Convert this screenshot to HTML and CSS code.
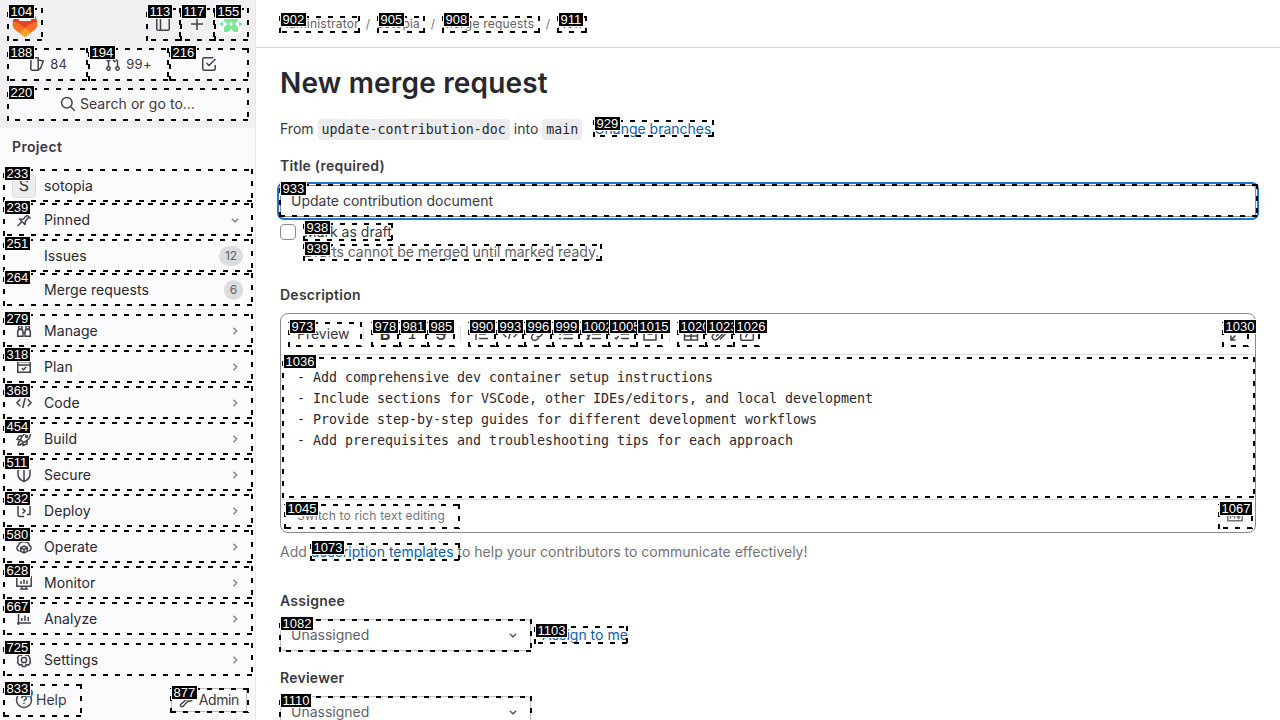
FILE: index.html
```html
<!DOCTYPE html>
<html lang="en">
<head>
<meta charset="utf-8">
<title>New merge request</title>
<link rel="stylesheet" href="styles.css">
</head>
<body>
<svg class="defs" width="0" height="0">
  <symbol id="chev-r" viewBox="0 0 16 16"><path d="M6.500 4.800 9.700 8l-3.200 3.200"/></symbol>
  <symbol id="chev-d" viewBox="0 0 16 16"><path d="M4.800 6.700 8 9.900l3.200-3.200"/></symbol>
  <symbol id="pin" viewBox="0 0 16 16"><path d="M1.500 14 5.500 10M3 6.500 9.500 13M4 7.500l3.500-.5L11 3M9 12.500l.5-3.500L13 5M9.500 1.500l5 5"/></symbol>
  <symbol id="users" viewBox="0 0 16 16"><path d="M1.700 13.200V9a2.500 2.500 0 0 1 5.300 0v4.200zM9 13.200V9a2.500 2.500 0 0 1 5.300 0v4.200zM7 10h2"/><circle cx="4.300" cy="4.500" r="1.800"/><circle cx="11.700" cy="4.500" r="1.800"/></symbol>
  <symbol id="calendar" viewBox="0 0 16 16"><path d="M1.750 2.750h12.500v10.500H1.750zM1.750 6h12.500M5.800 9.200l1.600 1.500 2.700-2.700"/></symbol>
  <symbol id="code" viewBox="0 0 16 16"><path d="M4.300 4.200.9 7.700l3.400 3.500M11.700 4.200l3.400 3.500-3.400 3.500M9.300 2.500 6.700 13"/></symbol>
  <symbol id="rocket" viewBox="0 0 16 16"><path d="M14.500 1.500C9 1.500 6 4 4.500 8.500l3 3C12 10 14.500 7 14.500 1.500zM6 5H3L1 8.500l3.500.500M11 10v3l-4 1.500v-3M4.500 10C2 10.500 2.500 12 2 14c2 0 3.500 0 4-2"/><circle cx="10.500" cy="5.500" r="1"/></symbol>
  <symbol id="shield" viewBox="0 0 16 16"><path d="M8 1 14 3v4.500c0 3.500-2.500 5.500-6 7-3.500-1.500-6-3.500-6-7V3zM8 1v13.500"/></symbol>
  <symbol id="deploy" viewBox="0 0 16 16"><path d="M4 2H2v9.500a2 2 0 0 0 2 2h4M12 2h2v9.500h-3M6.500 5.500 9 8l-2.500 2.500M13 11.500h-2"/></symbol>
  <symbol id="cloud" viewBox="0 0 16 16"><path d="M3.500 12C.5 11.500 0 8 2.500 6.500 3.500 1.500 12.500 1.500 13.500 6.500c2.500 1.500 2 5-1 5.500M8 7l3.300 1.800v3.500L8 14l-3.300-1.700V8.800zM4.700 8.900 8 10.500l3.300-1.600M8 10.500V14"/></symbol>
  <symbol id="monitor" viewBox="0 0 16 16"><path d="M.8 1.800v9.500h14.400V1.800zM4 14h8M6 11.300V14M10 11.300V14M5 6v3M8 4.500V9M11 5.500V9"/></symbol>
  <symbol id="chart" viewBox="0 0 16 16"><path d="M2.500 1v13M1 12h14M5.700 7v3M9 4.500V10M12.300 6v4"/></symbol>
  <symbol id="gear" viewBox="0 0 16 16"><circle cx="8" cy="8" r="2.600"/><path d="M6.500 1.500h3l.6 2 2-.6 1.500 2.600.4 1.500v2l.4 1.500-1.900 2.600-2.400-.6-.6 2h-3l-.6-2-2.400.6L1.600 10.500 2 9V7l-.4-1.500 1.900-2.600 2 .6z"/></symbol>
  <symbol id="help" viewBox="0 0 18 18"><circle cx="9" cy="9" r="7.500"/><path d="M6.700 7.300c0-3 4.600-3 4.600-.3 0 1.700-2.300 1.600-2.300 3.300M9 11.700v1.600"/></symbol>
  <symbol id="wrench" viewBox="0 0 16 16"><path d="M1.800 12.200 7 7.700C6 4.500 8.500 1.500 11.500 2.200L9.500 4.500l2 2 2.500-2c.7 3-2 5.500-5.200 4.500l-4.500 5.200c-1.700 1.300-3.800-.5-2.500-2z"/></symbol>
  <symbol id="panel" viewBox="0 0 16 16"><rect x="1.750" y="1.750" width="12.500" height="12.500" rx="1.500"/><path d="M5.500 2v12"/></symbol>
  <symbol id="plus" viewBox="0 0 16 16"><path d="M8 2v12M2 8h12"/></symbol>
  <symbol id="issues" viewBox="0 0 16 16"><path d="M2 1.750h7.200v12.500H3.500A1.700 1.700 0 0 1 1.800 12.500zM9.500 4l4.800 1-2.800 7.500-2.300 1"/></symbol>
  <symbol id="merge" viewBox="0 0 16 16"><circle cx="3.500" cy="12.500" r="1.700"/><circle cx="3.500" cy="3.500" r="1.700"/><circle cx="12.500" cy="12.500" r="1.700"/><path d="M3.500 5.200v5.600M12.500 10.800V5.500c0-1-.7-1.700-1.700-1.700H8.500M10.300 1.500 8 3.800l2.300 2.300"/></symbol>
  <symbol id="todo" viewBox="0 0 16 16"><path d="M12 1.750H3.200A1.500 1.500 0 0 0 1.750 3.200v9.600a1.500 1.500 0 0 0 1.500 1.450h9.500a1.500 1.500 0 0 0 1.500-1.500V9M5.500 7 8 9.500l6.500-6.500"/></symbol>
  <symbol id="search" viewBox="0 0 16 16"><circle cx="6.800" cy="6.800" r="5.300"/><path d="m10.800 10.800 4 4"/></symbol>
  <symbol id="quote" viewBox="0 0 16 16"><path d="M2 2v12M5 3.500h9M5 8h7M5 12.500h9"/></symbol>
  <symbol id="link" viewBox="0 0 16 16"><path d="m7 4.500 2-2a3 3 0 0 1 4.500 4.500l-3 3a2.500 2.500 0 0 1-3.800 0M9 11.500l-2 2A3 3 0 0 1 2.500 9l3-3a2.500 2.500 0 0 1 3.800 0"/></symbol>
  <symbol id="bullets" viewBox="0 0 16 16"><path d="M1 3.500h2M1 8h2M1 12.500h2M5.500 3.500H15M5.500 8H15M5.500 12.500H15"/></symbol>
  <symbol id="numbers" viewBox="0 0 16 16"><path d="M1.500 2H3v4M1 9.500h2.500L1.200 13h2.500M6 3.500h9M6 8h9M6 12.500h9"/></symbol>
  <symbol id="tasks" viewBox="0 0 16 16"><path d="m.8 3.500 1.400 1.400L4.700 2M.8 11.500l1.400 1.400L4.700 10M7 3.500h8M7 8h8M7 12.500h8"/></symbol>
  <symbol id="collapse" viewBox="0 0 16 16"><path d="M2 2h12v12H2zM5.500 8h5"/></symbol>
  <symbol id="table" viewBox="0 0 16 16"><path d="M1.500 2h13v12h-13zM1.500 6h13M1.500 10h13M8 6v8"/></symbol>
  <symbol id="clip" viewBox="0 0 16 16"><path d="m5 10.500 5-5a1.500 1.500 0 0 1 2 2l-5.500 5.500a3 3 0 0 1-4.300-4.300L8 3a4 4 0 0 1 5.800 5.500L9 13.500"/></symbol>
  <symbol id="slash" viewBox="0 0 16 16"><rect x="1.700" y="1.700" width="12.600" height="12.600" rx="1"/><path d="m9.300 4.500-2.600 7"/></symbol>
  <symbol id="expand" viewBox="0 0 16 16"><path d="M9.500 6.500 14 2M9.500 2H14v4.500M6.500 9.500 2 14M2 9.500V14h4.500"/></symbol>
  <symbol id="markdown" viewBox="0 0 16 16"><path d="M.8 3.200h14.400v9.600H.8zM3.500 10.500v-5l2 2.500 2-2.500v5M11.500 5.500v4.500M9.800 8.500l1.700 1.700 1.700-1.700"/></symbol>
</svg>

<div class="app">
  <aside class="sidebar">
    <div class="super">
      <div class="brandbar">
        <svg class="logo" viewBox="0 0 26 25"><path fill="#e24329" d="M4 1 7.500 9h11L22 1l3.500 9-12.500 9L.5 10z"/><path fill="#fc6d26" d="M1 10c-1 3 0 6 2.500 8L13 25l9.500-7c2.500-2 3.500-5 2.500-8-3-.5-6 1-12 6C7 11 4 9.500 1 10z"/><path fill="#fca326" d="m13 16 5.500 4.500L13 25l-5.500-4.500z"/></svg>
        <span class="tools">
          <svg class="ic"><use href="#panel"/></svg>
          <svg class="ic"><use href="#plus"/></svg>
          <svg class="avatar" viewBox="0 0 24 24"><circle cx="12" cy="12" r="12" fill="#fff"/><path fill="#7be796" d="M5 4h5l2 3 2-3h5v5l-3 3 3 3v5h-4l-3-3-3 3H5v-5l3-3-3-3zM0 12l4-2.500v5zM24 12l-4-2.500v5z"/><path fill="#fff" d="m12 10 2 2-2 2-2-2zM5 9l3 3-3 3zM19 9l-3 3 3 3z"/></svg>
        </span>
      </div>
      <div class="counts">
        <span class="count"><svg class="ic"><use href="#issues"/></svg>84</span>
        <span class="count"><svg class="ic"><use href="#merge"/></svg>99+</span>
        <span class="count"><svg class="ic"><use href="#todo"/></svg></span>
      </div>
      <div class="search"><svg class="ic"><use href="#search"/></svg>Search or go to…</div>
    </div>
    <div class="context">Project</div>
    <nav class="nav">
      <a class="row"><span class="letter">S</span>sotopia</a>
      <a class="row"><svg class="ic"><use href="#pin"/></svg>Pinned<svg class="ic chev"><use href="#chev-d"/></svg></a>
      <a class="row sub first">Issues<span class="badge">12</span></a>
      <a class="row sub">Merge requests<span class="badge">6</span></a>
    </nav>
    <nav class="nav menu">
      <a class="row"><svg class="ic"><use href="#users"/></svg>Manage<svg class="ic chev"><use href="#chev-r"/></svg></a>
      <a class="row"><svg class="ic"><use href="#calendar"/></svg>Plan<svg class="ic chev"><use href="#chev-r"/></svg></a>
      <a class="row"><svg class="ic"><use href="#code"/></svg>Code<svg class="ic chev"><use href="#chev-r"/></svg></a>
      <a class="row"><svg class="ic"><use href="#rocket"/></svg>Build<svg class="ic chev"><use href="#chev-r"/></svg></a>
      <a class="row"><svg class="ic"><use href="#shield"/></svg>Secure<svg class="ic chev"><use href="#chev-r"/></svg></a>
      <a class="row"><svg class="ic"><use href="#deploy"/></svg>Deploy<svg class="ic chev"><use href="#chev-r"/></svg></a>
      <a class="row"><svg class="ic"><use href="#cloud"/></svg>Operate<svg class="ic chev"><use href="#chev-r"/></svg></a>
      <a class="row"><svg class="ic"><use href="#monitor"/></svg>Monitor<svg class="ic chev"><use href="#chev-r"/></svg></a>
      <a class="row"><svg class="ic"><use href="#chart"/></svg>Analyze<svg class="ic chev"><use href="#chev-r"/></svg></a>
    </nav>
    <nav class="nav menu">
      <a class="row"><svg class="ic"><use href="#gear"/></svg>Settings<svg class="ic chev"><use href="#chev-r"/></svg></a>
    </nav>
    <div class="foot">
      <span class="help"><svg class="ic"><use href="#help"/></svg>Help<i class="dot"></i></span>
      <span class="admin"><svg class="ic"><use href="#wrench"/></svg>Admin</span>
    </div>
  </aside>

  <main class="main">
    <div class="crumbs"><span class="c1">Administrator</span><i>/</i><span class="c2">sotopia</span><i>/</i><span class="c3">Merge requests</span><i>/</i><span class="c4">New</span></div>
    <div class="content">
      <h1>New merge request</h1>
      <p class="branches">From <code>update-contribution-doc</code> into <code>main</code><a class="link">Change branches</a></p>
      <div class="label title-label">Title (required)</div>
      <div class="input">Update contribution document</div>
      <div class="draft"><span class="check"></span><div><div>Mark as draft</div><div class="hint">Drafts cannot be merged until marked ready.</div></div></div>
      <div class="label desc-label">Description</div>
      <div class="editor">
        <div class="toolbar">
          <span class="preview">Preview</span><span class="sep"></span>
          <span class="group g1"><b class="tool">B</b><b class="tool it">I</b><b class="tool st">S</b></span><span class="sep"></span>
          <span class="group g2">
            <span class="tool"><svg class="ic"><use href="#quote"/></svg></span><span class="tool"><svg class="ic"><use href="#code"/></svg></span><span class="tool"><svg class="ic"><use href="#link"/></svg></span><span class="tool"><svg class="ic"><use href="#bullets"/></svg></span><span class="tool"><svg class="ic"><use href="#numbers"/></svg></span><span class="tool"><svg class="ic"><use href="#tasks"/></svg></span><span class="tool"><svg class="ic"><use href="#collapse"/></svg></span></span><span class="sep"></span>
          <span class="group g3"><span class="tool"><svg class="ic"><use href="#table"/></svg></span><span class="tool"><svg class="ic"><use href="#clip"/></svg></span><span class="tool"><svg class="ic"><use href="#slash"/></svg></span></span>
          <svg class="ic full"><use href="#expand"/></svg>
        </div>
        <pre class="text">- Add comprehensive dev container setup instructions
- Include sections for VSCode, other IDEs/editors, and local development
- Provide step-by-step guides for different development workflows
- Add prerequisites and troubleshooting tips for each approach</pre>
        <div class="status"><span>Switch to rich text editing</span><svg class="ic"><use href="#markdown"/></svg></div>
      </div>
      <p class="tip">Add <a class="link">description templates</a> to help your contributors to communicate effectively!</p>
      <div class="label as-label">Assignee</div>
      <div class="pick"><span class="select">Unassigned<svg class="ic"><use href="#chev-d"/></svg></span><a class="link">Assign to me</a></div>
      <div class="label rev-label">Reviewer</div>
      <div class="pick"><span class="select">Unassigned<svg class="ic"><use href="#chev-d"/></svg></span></div>
    </div>
  </main>
</div>
<div class="marks" id="marks"></div>
<script src="marks.js"></script>
</body>
</html>
```
FILE: marks.js
```js
// Each entry: id, left, top, right, bottom of the outlined element.
const marks = [
  [104,7,8,43,41],[113,146,8,181,41],[117,180,8,215,41],[155,214,8,249,41],
  [188,7,48,88,81],[194,88,48,169,81],[216,169,48,249,81],[220,7,88,249,121],
  [233,3,169,253,202],[239,3,203,253,236],[251,3,239,253,272],[264,3,273,253,306],
  [279,3,314,253,347],[318,3,350,253,383],[368,3,386,253,419],[454,3,422,253,455],
  [511,3,458,253,491],[532,3,494,253,527],[580,3,530,253,563],[628,3,566,253,599],
  [667,3,602,253,635],[725,3,643,253,676],[833,3,684,82,717],[877,170,688,249,713],
  [902,279,16,360,33],[905,377,16,425,33],[908,442,16,540,33],[911,557,16,587,33],
  [929,593,120,714,137],[933,279,184,1258,217],[938,303,223,393,241],[939,303,244,602,261],
  [973,288,322,362,347],[978,371,322,399,347],[981,399,322,427,347],[985,427,322,455,347],
  [990,468,322,496,347],[993,496,322,524,347],[996,524,322,552,347],[999,552,322,580,347],
  [1002,580,322,608,347],[1005,608,322,636,347],[1015,636,322,663,347],
  [1020,677,322,705,347],[1023,705,322,733,347],[1026,733,322,760,347],[1030,1222,322,1249,347],
  [1036,282,357,1255,498],[1045,284,504,460,529],[1067,1218,504,1253,529],
  [1073,310,543,460,561],[1082,279,619,532,652],[1103,534,626,628,644],[1110,279,696,532,729]
];
document.getElementById('marks').innerHTML = marks.map(([id, l, t, r, b]) => {
  const w = r - l, h = b - t;
  // Every side starts its own dash run, clockwise from the top-left corner.
  const d = `M1 1H${w}M${w - 1} 0V${h}M${w - 1} ${h - 1}H0M1 ${h}V0`;
  return `<div class="mark${t < 170 && h < 34 && (t < 20 || t === 120) ? ' high' : ''}" style="left:${l}px;top:${t}px;width:${w}px;height:${h}px"><svg width="${w}" height="${h}"><path d="${d}"/></svg><span>${id}</span></div>`;
}).join('');
```
FILE: styles.css
```css
* { box-sizing: border-box; }
body { margin: 0; width: 1280px; height: 720px; overflow: hidden; position: relative; font: 14px/20px Inter, "Liberation Sans", sans-serif; color: #3a383f; background: #fff; }
p, h1, pre { margin: 0; }
.defs { position: absolute; }
.ic { width: 16px; height: 16px; flex: none; fill: none; stroke: #434248; stroke-width: 1.5; }
.app { display: flex; height: 720px; overflow: hidden; }
.sidebar { width: 256px; flex: none; background: #fbfafd; border-right: 1px solid #e7e7ea; }
.super { height: 128px; background: #f0f0f2; padding: 8px; }
.brandbar { height: 32px; display: flex; justify-content: space-between; align-items: center; padding: 0 4px; }
.logo { width: 26px; height: 25px; }
.tools { display: flex; align-items: center; gap: 18px; }
.avatar { width: 24px; height: 24px; margin-left: -4px; }
.counts { display: flex; gap: 2px; margin-top: 9px; }
.count { flex: 1; height: 31px; display: flex; align-items: center; justify-content: center; gap: 5px; background: #fbfafd; border-radius: 4px; font-size: 13px; letter-spacing: .3px; padding: 0 0 1px 2px; }
.search { margin-top: 9px; height: 31px; display: flex; align-items: center; justify-content: center; gap: 4px; background: #fbfafd; border-radius: 4px; padding-bottom: 2px; letter-spacing: .08px; }
.context { padding: 9px 12px 0; height: 42px; font-weight: 600; letter-spacing: .35px; }
.nav { display: flex; flex-direction: column; gap: 2px; padding: 0 4px; color: #28272d; letter-spacing: .07px; }
.row { height: 32px; display: flex; align-items: center; padding: 0 8px; }
.row > .ic:first-child { margin: 0 12px 0 4px; }
.letter { width: 24px; height: 24px; margin-right: 8px; border: 1px solid #dcdcde; border-radius: 4px; background: #ececef; text-align: center; font-size: 16px; line-height: 20px; color: #3a383f; }
.row .chev { margin-left: auto; stroke: #89888d; }
.row.sub { padding-left: 40px; }
.row.first { margin-top: 2px; }
.badge { margin-left: auto; background: #dcdcde; border-radius: 10px; padding: 0 6px; font-size: 12px; color: #626168; letter-spacing: -.1px; }
.menu { gap: 4px; margin-top: 3px; padding-top: 6px; background: linear-gradient(#e7e7ea, #e7e7ea) 16px 0 / 223px 1px no-repeat; }
.foot { display: flex; justify-content: space-between; align-items: center; height: 32px; margin-top: 8px; padding: 0 8px 0 15px; }
.help { display: flex; align-items: center; gap: 3px; position: relative; }
.help .ic { width: 18px; height: 18px; }
.dot { position: absolute; left: 10px; top: -1px; width: 8px; height: 8px; border-radius: 50%; background: #1f75cb; }
.admin { height: 24px; display: flex; align-items: center; gap: 4px; padding: 0 7px; border: 1px solid #bfbfc3; border-radius: 3px; background: #fff; letter-spacing: -.4px; }
.main { flex: 1; }
.crumbs { height: 48px; border-bottom: 1px solid #dcdcde; padding-left: 24px; display: flex; align-items: center; font-size: 12px; color: #626168; letter-spacing: .22px; }
.crumbs i { width: 18px; text-align: center; font-style: normal; color: #737278; }
.c1 { width: 79px; } .c2 { width: 47px; } .c3 { width: 97px; } .c4 { width: 28px; }
.content { padding: 17px 24px 0; }
h1 { font-size: 28px; line-height: 36px; font-weight: 600; color: #28272d; white-space: nowrap; letter-spacing: .18px; }
.branches { margin-top: 18px; height: 20px; white-space: nowrap; }
code { font: 13.300px/17px "DejaVu Sans Mono", monospace; letter-spacing: .01px; background: #ececef; color: #28272d; border-radius: 4px; padding: 2px 4px; }
.branches code { display: inline-block; height: 21px; }
.link { color: #0b5cad; }
.branches .link { margin-left: 12px; }
.label { font-weight: 600; letter-spacing: .25px; }
.title-label { margin-top: 17px; }
.input { height: 32px; margin-top: 9px; padding: 6px 11px; border-radius: 4px; box-shadow: inset 0 0 0 1px #89888d, 0 0 0 1px #fff, 0 0 0 3px #1f75cb; line-height: 20px; }
.draft { display: flex; gap: 8px; margin-top: 5px; }
.check { width: 16px; height: 16px; margin-top: 2px; border: 1px solid #89888d; border-radius: 4px; }
.tip { color: #737278; margin-top: 9px; }
.hint { color: #626168; }
.desc-label { margin-top: 23px; }
.editor { margin-top: 8px; height: 220px; border: 1px solid #89888d; border-radius: 8px; display: flex; flex-direction: column; }
.toolbar { height: 41px; border-bottom: 1px solid #dcdcde; display: flex; align-items: center; padding: 0 10px 0 16px; }
.preview { width: 66px; }
.sep { width: 1px; height: 16px; background: #dcdcde; }
.group { display: flex; }
.g1 { margin: 0 5px 0 7px; } .g2 { margin: 0 5px 0 7px; } .g3 { margin-left: 7px; }
.tool { width: 28px; height: 24px; display: flex; align-items: center; justify-content: center; font-size: 16px; }
.it { font-family: "DejaVu Sans Mono", monospace; font-style: italic; font-weight: 400; }
.st { text-decoration: line-through; font-weight: 500; }
.full { margin-left: auto; }
.text { flex: 1; padding: 12px 16px; font: 13.300px/21px "DejaVu Sans Mono", monospace; letter-spacing: -.007px; color: #28272d; }
.status { height: 33px; border-top: 1px solid #dcdcde; display: flex; align-items: center; justify-content: space-between; padding: 0 12px 0 16px; font-size: 12px; letter-spacing: .15px; color: #737278; }
.status .ic { stroke: #737278; }
.as-label { margin-top: 29px; }
.pick { display: flex; align-items: center; margin-top: 8px; gap: 11px; }
.select { width: 251px; height: 32px; border: 1px solid #bfbfc3; border-radius: 4px; display: flex; align-items: center; justify-content: space-between; padding: 0 9px 0 10px; color: #626168; }
.select .ic { stroke: #626168; }
.rev-label { margin-top: 17px; }
.marks { position: absolute; inset: 0; }
.mark { position: absolute; }
.mark svg { display: block; fill: none; stroke: #000; stroke-width: 2; stroke-dasharray: 5 7; }
.mark span { position: absolute; left: 2px; top: -2px; padding: 0 1.600px; height: 13px; background: #000; box-shadow: 0 0 0 1px #fff; color: #fff; font: 13px/13px "Liberation Sans", sans-serif; }
.mark.high span { top: -3px; }
```
